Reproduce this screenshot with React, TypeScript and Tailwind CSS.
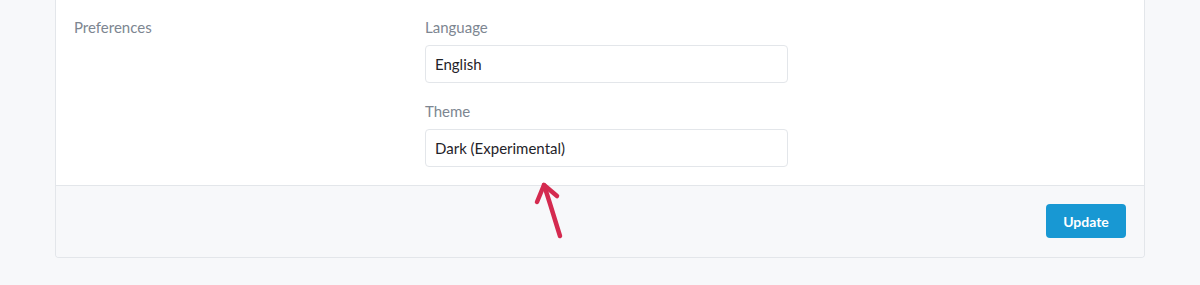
import React from 'react';

const Field: React.FC<{ label: string; value: string; first?: boolean }> = ({ label, value, first }) => (
  <div className={first ? '' : 'mt-4'}>
    <label className="block text-[15px] leading-6 text-[#7d8691] mb-[6px]">{label}</label>
    <div className="h-[38px] w-[363px] flex items-center px-[9px] bg-white border border-[#e3e6ea] rounded-[4px] text-[15px] text-[#1f2329]">
      {value}
    </div>
  </div>
);

const App: React.FC = () => {
  return (
    <div
      className="min-h-[285px] w-full bg-[#f7f8fa] px-[55px] relative"
      style={{ fontFamily: 'Lato, "Noto Sans", sans-serif' }}
    >
      <div className="border-x border-b border-[#e3e6ea] rounded-b-[4px] overflow-hidden">
        {/* Preferences section */}
        <div className="bg-white flex pt-[15px] pb-[18px] pl-[18px] pr-[19px]">
          <div className="w-[351px] text-[15px] leading-6 text-[#7d8691]">Preferences</div>
          <div>
            <Field label="Language" value="English" first />
            <Field label="Theme" value="Dark (Experimental)" />
          </div>
        </div>

        {/* Footer */}
        <div className="bg-[#f7f8fa] border-t border-[#e3e6ea] flex justify-end pt-[18px] pb-[19px] px-[18px]">
          <button className="h-[34px] w-[80px] rounded-[4px] bg-[#1898d3] text-white text-[14px] font-bold">
            Update
          </button>
        </div>
      </div>

      {/* Annotation arrow */}
      <svg className="absolute left-0 top-0 pointer-events-none" width="1200" height="285" viewBox="0 0 1200 285">
        <g fill="none" stroke="#d42a4f" strokeWidth="4.5" strokeLinecap="round" strokeLinejoin="round">
          <path d="M560 236 C555 220 549 200 544 185" />
          <path d="M537 202 L544 185 L557 196" />
        </g>
      </svg>
    </div>
  );
};

export default App;
